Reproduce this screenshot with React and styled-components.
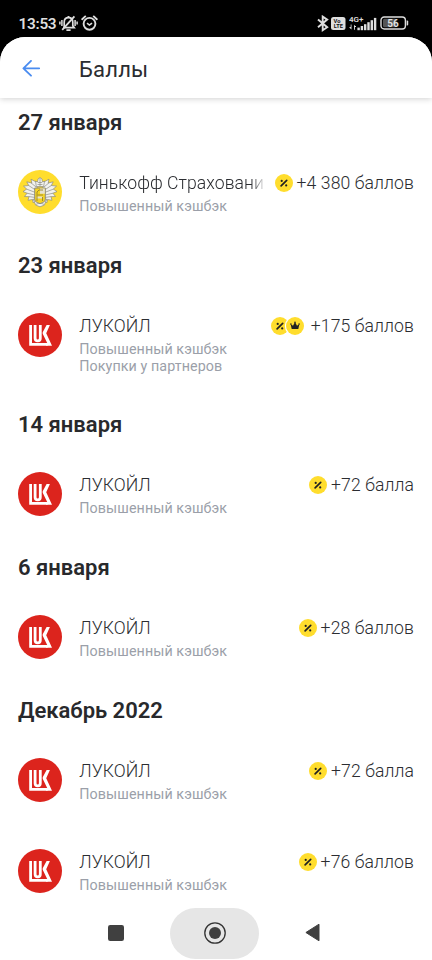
import styled, { createGlobalStyle } from "styled-components";

const GlobalStyle = createGlobalStyle`
  * {
    box-sizing: border-box;
  }

  body {
    margin: 0;
    background: #000;
  }
`;

const Screen = styled.div`
  width: 432px;
  height: 960px;
  display: flex;
  flex-direction: column;
  overflow: hidden;
  background: #000;
  font-family: Roboto, "Liberation Sans", sans-serif;
  color: #2b2d31;

  svg {
    display: block;
    flex: none;
  }
`;

const StatusBar = styled.div`
  height: 37px;
  flex: none;
  display: flex;
  align-items: center;
  justify-content: space-between;
  padding: 9px 23px 0 18.5px;
`;

const StatusGroup = styled.div`
  display: flex;
  align-items: center;
  gap: ${(p) => p.$gap}px;
`;

const Clock = styled.span`
  font-size: 15.4px;
  font-weight: 600;
  line-height: 18px;
  letter-spacing: -0.3px;
  padding-top: 1px;
  color: #dedede;
`;

const Sheet = styled.div`
  flex: 1;
  min-height: 0;
  display: flex;
  flex-direction: column;
  overflow: hidden;
  background: #fff;
  border-radius: 25px 25px 0 0;
`;

const Header = styled.header`
  height: 61px;
  flex: none;
  display: flex;
  align-items: center;
  gap: 38.5px;
  padding: 2px 20px 0 20.5px;
  background: #fff;
  box-shadow: 0 1px 6px rgba(0, 0, 0, 0.18);
  z-index: 1;
`;

const Title = styled.h1`
  margin: 0;
  padding-top: 2px;
  font-size: 22px;
  font-weight: 400;
  line-height: 26px;
  letter-spacing: 0.2px;
  color: #2b2d31;
`;

const List = styled.main`
  flex: 1;
  min-height: 0;
  overflow: hidden;
  margin-top: -2px;
`;

const DateTitle = styled.h2`
  height: 52px;
  margin: 0;
  padding: 0 18px;
  font-size: 22px;
  font-weight: 600;
  line-height: 53px;
  letter-spacing: 0;
  color: #28292c;
`;

const Row = styled.div`
  display: flex;
  align-items: flex-start;
  padding: 22px 18px 0;
  height: ${(p) => (p.$lines > 1 ? 107.8 : 90.7)}px;
`;

const Info = styled.div`
  flex: 1;
  min-width: 0;
  margin-left: 17.3px;
`;

const TopLine = styled.div`
  display: flex;
  align-items: center;
  height: 26px;
`;

const Name = styled.div`
  flex: 1;
  min-width: 0;
  overflow: hidden;
  white-space: nowrap;
  font-size: 17.6px;
  font-weight: 340;
  line-height: 26px;
  letter-spacing: 0.05px;
  mask-image: ${(p) =>
    p.$fade ? "linear-gradient(to right, #000 92%, transparent)" : "none"};
`;

const Badges = styled.div`
  display: flex;
  margin: 0 ${(p) => (p.$count > 1 ? 7 : 4)}px 0 9px;
`;

const Badge = styled.span`
  width: 18px;
  height: 18px;
  display: flex;
  align-items: center;
  justify-content: center;
  border-radius: 50%;
  background: #ffdd2d;

  & + & {
    margin-left: -3.5px;
    box-shadow: 0 0 0 1.2px #fff;
  }
`;

const Points = styled.div`
  white-space: nowrap;
  font-size: 17.6px;
  font-weight: 340;
  line-height: 26px;
  letter-spacing: 0.1px;
`;

const Note = styled.div`
  font-size: 14.3px;
  line-height: 17px;
  letter-spacing: 0.08px;
  color: #9b9fa9;

  &:nth-child(2) {
    margin-top: 2px;
  }
`;

const NavBar = styled.nav`
  height: 52px;
  flex: none;
  display: flex;
  align-items: flex-start;
  background: #fff;
  padding-left: 62px;
`;

const NavButton = styled.div`
  width: ${(p) => p.$width}px;
  height: 51px;
  display: flex;
  align-items: center;
  justify-content: center;
  padding-bottom: 2px;
  border-radius: 26px;
  background: ${(p) => (p.$active ? "#e6e6e6" : "transparent")};
`;

function MutedBell() {
  return (
    <svg width="19" height="17" viewBox="0 0 19 17" fill="none" stroke="#dedede">
      <path
        d="M5.2 12.3V7.2C5.2 4.4 7 2.6 9.5 2.6s4.3 1.8 4.3 4.6v3.6l1.4 1.9H4"
        strokeWidth="1.7"
      />
      <path d="M7.4 15.1h4.2M9.5 1v1.5" strokeWidth="1.9" />
      <path d="M2.9 5v6M.9 6.4v3.2M16.1 5v6M18.1 6.4v3.2" strokeWidth="1.5" />
      <path d="M3.2 14.8 15.4 1.4" strokeWidth="1.8" />
    </svg>
  );
}

function AlarmIcon() {
  return (
    <svg width="17" height="17" viewBox="0 0 17 17" fill="none" stroke="#dedede">
      <circle cx="8.5" cy="8.8" r="5.9" strokeWidth="1.9" />
      <path d="m6 8.2 2.4 1.9 2.6-2" strokeWidth="1.6" />
      <path
        d="M1.2 4.2 4.2 1.4M15.8 4.2l-3-2.8"
        strokeWidth="1.9"
        strokeLinecap="round"
      />
    </svg>
  );
}

function BluetoothIcon() {
  return (
    <svg width="12" height="17" viewBox="0 0 12 17" fill="none" stroke="#dedede">
      <path d="m1 4.6 9.2 7.6-4.5 3V1.6l4.5 3L1 12.3" strokeWidth="1.9" />
    </svg>
  );
}

function VolteIcon() {
  return (
    <svg width="15" height="13" viewBox="0 0 15 13">
      <rect width="14.5" height="13" rx="2.5" fill="#dedede" />
      <g
        fill="#111"
        fontFamily="Roboto, sans-serif"
        fontWeight="700"
        textAnchor="middle"
      >
        <text x="6" y="6" fontSize="5.8">
          Vo
        </text>
        <text x="7.3" y="11.4" fontSize="5.6">
          LTE
        </text>
      </g>
    </svg>
  );
}

function SignalIcon() {
  const bars = [2.6, 4.2, 6, 8, 10, 12.3];

  return (
    <svg width="28" height="16" viewBox="0 0 28 16" fill="#dedede">
      <text
        x="0"
        y="6.8"
        fontSize="8"
        fontWeight="600"
        fontFamily="Roboto, sans-serif"
      >
        4G+
      </text>
      <path d="M2.5 9.5v5L.5 12.7h1.2V9.5zM5 14.8v-5l2 1.9H5.9v3.1zM.5 12h2v1h-2zM5 11h2v1H5z" />
      {bars.map((height, i) => (
        <rect
          key={height}
          x={8.4 + i * 3.3}
          y={15.2 - height}
          width="2.4"
          height={height}
        />
      ))}
    </svg>
  );
}

function BatteryIcon() {
  return (
    <svg width="29" height="14" viewBox="0 0 29 14">
      <rect x="3" y="2.8" width="13.5" height="8.4" rx="1.5" fill="#555" />
      <rect
        x="1"
        y="1"
        width="24.4"
        height="12"
        rx="3.2"
        fill="none"
        stroke="#dedede"
        strokeWidth="1.4"
      />
      <path d="M26.6 4.6h.6a1 1 0 0 1 1 1v2.8a1 1 0 0 1-1 1h-.6z" fill="#dedede" />
      <text
        x="13"
        y="10.6"
        fontSize="10"
        fontWeight="600"
        textAnchor="middle"
        fontFamily="Roboto, sans-serif"
        fill="#e6e6e6"
      >
        56
      </text>
    </svg>
  );
}

function BackArrow() {
  return (
    <svg width="20" height="18" viewBox="0 0 20 18" fill="none">
      <path
        d="M18.2 8.3H2.6M10 .9 2.4 8.3l7.6 7.4"
        stroke="#4a8cf0"
        strokeWidth="1.8"
        strokeLinecap="round"
        strokeLinejoin="round"
      />
    </svg>
  );
}

function PercentIcon() {
  return (
    <svg width="10" height="10" viewBox="0 0 10 10">
      <path d="m2.1 7.9 5.6-5.6" stroke="#222" strokeWidth="1.7" strokeLinecap="round" />
      <circle cx="2.7" cy="2.9" r="1.1" fill="#222" />
      <circle cx="7.2" cy="7.4" r="1.1" fill="#222" />
    </svg>
  );
}

function CrownIcon() {
  return (
    <svg width="10" height="9" viewBox="0 0 10 9">
      <path d="M1.7 8 .6 3.1l2.4 1.6L5 1.1l2 3.6 2.4-1.6L8.3 8z" fill="#222" />
      <circle cx=".9" cy="3" r=".7" fill="#222" />
      <circle cx="5" cy="1.2" r=".8" fill="#222" />
      <circle cx="9.1" cy="3" r=".7" fill="#222" />
    </svg>
  );
}

function LukoilLogo() {
  return (
    <svg width="44" height="44" viewBox="0 0 44 44">
      <circle cx="22" cy="22" r="22" fill="#dc241d" />
      <g fill="none" stroke="#fff" strokeWidth="2.8">
        <path d="M12.6 12v19.3h17" />
        <path d="M17.1 12v13.3a2.6 2.6 0 0 0 5.2 0V12" />
      </g>
      <path
        d="M28.6 12h3.3l-3.7 8.2 5.8 12.5h-6l1.2-2.8-4.5-9.2v-1.4z"
        fill="#fff"
      />
    </svg>
  );
}

// Герб: крылья-листья по бокам, корона сверху и щит с вензелем
function TinkoffLogo() {
  const wing = (
    <>
      <path d="M19 12.5 13 9.2l.8 3.8-5-1.2 1.9 3.7-5.2.6 3.2 3-3.7 2.5 4.1 1.6-2.6 3.3 4.5.2-1 3.6 4.5-.9.6 3.3 3.9-2z" />
      <path d="m18 17-5-4.2M17.5 20l-7-4.6M17 22.3l-8.4-3.2M17 25l-8-1.8M17.5 27.5l-6.5-.9M18 29.5l-3.5.5" />
    </>
  );

  return (
    <svg width="44" height="44" viewBox="0 0 44 44">
      <circle cx="22" cy="22" r="22" fill="#ffdd2d" />
      <g fill="#f2f2ef" stroke="#85857d" strokeWidth=".65" strokeLinejoin="round">
        {wing}
        <g transform="translate(44 0) scale(-1 1)">{wing}</g>
        <path d="m15.5 29 2 6 4.5 1.8 4.5-1.8 2-6z" />
        <path d="M18.3 16.5 17.5 11l2 1 .5-3 2-1.5L24 9l.5 3 2-1-.8 5.5z" />
        <path d="M20 12.5h4M19.5 14.5h5M22 8v8M18 34.5l4-2 4 2" />
      </g>
      <path
        d="M16.7 18h10.6v11.3c0 2.5-2.2 3.1-5.3 4.4-3.1-1.3-5.3-1.9-5.3-4.4z"
        fill="#f6d423"
        stroke="#85857d"
        strokeWidth=".9"
      />
      <path d="M22 18.5h4.8v5.3H22zM18.5 26.5h6v2h-6z" fill="#e6e2d0" />
      <path
        d="M19 31v-9l2-2h4M19.5 25h5.5M24.5 27v4"
        fill="none"
        stroke="#97862a"
        strokeWidth=".9"
      />
    </svg>
  );
}

const LOGOS = {
  tinkoff: TinkoffLogo,
  lukoil: LukoilLogo,
};

const CASHBACK = "Повышенный кэшбэк";

const SECTIONS = [
  {
    date: "27 января",
    rows: [
      {
        logo: "tinkoff",
        name: "Тинькофф Страховани",
        notes: [CASHBACK],
        badges: ["percent"],
        points: "+4 380 баллов",
        fade: true,
      },
    ],
  },
  {
    date: "23 января",
    rows: [
      {
        logo: "lukoil",
        name: "ЛУКОЙЛ",
        notes: [CASHBACK, "Покупки у партнеров"],
        badges: ["percent", "crown"],
        points: "+175 баллов",
      },
    ],
  },
  {
    date: "14 января",
    rows: [
      {
        logo: "lukoil",
        name: "ЛУКОЙЛ",
        notes: [CASHBACK],
        badges: ["percent"],
        points: "+72 балла",
      },
    ],
  },
  {
    date: "6 января",
    rows: [
      {
        logo: "lukoil",
        name: "ЛУКОЙЛ",
        notes: [CASHBACK],
        badges: ["percent"],
        points: "+28 баллов",
      },
    ],
  },
  {
    date: "Декабрь 2022",
    rows: [
      {
        logo: "lukoil",
        name: "ЛУКОЙЛ",
        notes: [CASHBACK],
        badges: ["percent"],
        points: "+72 балла",
      },
      {
        logo: "lukoil",
        name: "ЛУКОЙЛ",
        notes: [CASHBACK],
        badges: ["percent"],
        points: "+76 баллов",
      },
    ],
  },
];

function Operation({ logo, name, notes, badges, points, fade }) {
  const Logo = LOGOS[logo];

  return (
    <Row $lines={notes.length}>
      <Logo />
      <Info>
        <TopLine>
          <Name $fade={fade}>{name}</Name>
          <Badges $count={badges.length}>
            {badges.map((badge) => (
              <Badge key={badge}>
                {badge === "crown" ? <CrownIcon /> : <PercentIcon />}
              </Badge>
            ))}
          </Badges>
          <Points>{points}</Points>
        </TopLine>
        {notes.map((note) => (
          <Note key={note}>{note}</Note>
        ))}
      </Info>
    </Row>
  );
}

export default function App() {
  return (
    <Screen>
      <GlobalStyle />
      <StatusBar>
        <StatusGroup $gap={3}>
          <Clock>13:53</Clock>
          <MutedBell />
          <AlarmIcon />
        </StatusGroup>
        <StatusGroup $gap={2.8}>
          <BluetoothIcon />
          <VolteIcon />
          <SignalIcon />
          <BatteryIcon />
        </StatusGroup>
      </StatusBar>

      <Sheet>
        <Header>
          <BackArrow />
          <Title>Баллы</Title>
        </Header>
        <List>
          {SECTIONS.map((section) => (
            <section key={section.date}>
              <DateTitle>{section.date}</DateTitle>
              {section.rows.map((row, i) => (
                <Operation key={i} {...row} />
              ))}
            </section>
          ))}
        </List>
      </Sheet>

      <NavBar>
        <NavButton $width={108}>
          <svg width="16" height="16" viewBox="0 0 16 16">
            <rect width="16" height="16" rx="2.2" fill="#404040" />
          </svg>
        </NavButton>
        <NavButton $width={89} $active>
          <svg width="22" height="22" viewBox="0 0 22 22">
            <circle cx="11" cy="11" r="10.2" fill="none" stroke="#333" strokeWidth="1.3" />
            <circle cx="11" cy="11" r="6" fill="#404040" />
          </svg>
        </NavButton>
        <NavButton $width={107}>
          <svg width="15" height="19" viewBox="0 0 15 19">
            <path
              d="M14 1.2v16.6L.9 9.5z"
              fill="#404040"
              stroke="#404040"
              strokeLinejoin="round"
            />
          </svg>
        </NavButton>
      </NavBar>
    </Screen>
  );
}
